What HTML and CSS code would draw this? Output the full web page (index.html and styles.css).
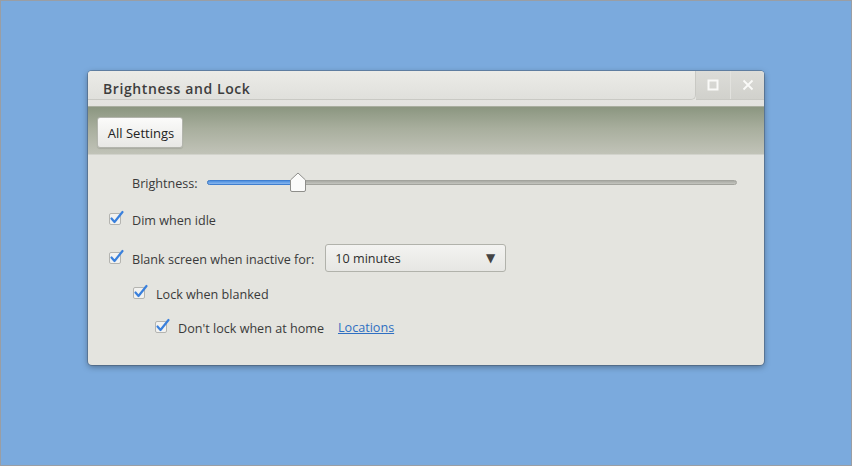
FILE: index.html
```html
<!DOCTYPE html>
<html>
<head>
<meta charset="utf-8">
<link rel="stylesheet" href="styles.css">
</head>
<body>
<div class="desktop">
  <div class="window">
    <div class="titlebar">
      <div class="tab"><span class="title">Brightness and Lock</span></div>
      <div class="controls">
        <div class="ctl">
          <svg width="12" height="12" viewBox="0 0 12 12"><rect x="1.5" y="1.5" width="9" height="9" fill="none" stroke="#fafaf8" stroke-width="2"/></svg>
        </div>
        <div class="ctl sep">
          <svg width="12" height="12" viewBox="0 0 12 12"><path d="M1.5 1.5 L10.5 10.5 M10.5 1.5 L1.5 10.5" stroke="#fafaf8" stroke-width="1.8" fill="none"/></svg>
        </div>
      </div>
    </div>
    <div class="toolbar">
      <button class="btn">All Settings</button>
    </div>
    <div class="content">
      <div class="row slider-row">
        <span class="label">Brightness:</span>
        <div class="slider">
          <div class="track"></div>
          <div class="fill" style="width: 91px"></div>
          <svg class="knob" style="left: 82px" width="18" height="21" viewBox="0 0 18 21"><path d="M1.5 8 L9 1 L16.5 8 V18 Q16.5 19.5 15 19.5 H3 Q1.5 19.5 1.5 18 Z" fill="#fbfbfa" stroke="#8e8e8a" stroke-width="1"/></svg>
        </div>
      </div>
      <div class="row check-row r-dim">
        <span class="cb"><svg width="16" height="16" viewBox="0 0 16 16"><rect x="1.5" y="3.5" width="11" height="11" rx="1.5" fill="#f2f2f0" stroke="#b4b4b0"/><path d="M3.5 8.5 L6.5 12 L14.5 2" fill="none" stroke="#3a80dc" stroke-width="2.2" stroke-linecap="round" stroke-linejoin="round"/></svg></span>
        <span class="label">Dim when idle</span>
      </div>
      <div class="row check-row r-blank">
        <span class="cb"><svg width="16" height="16" viewBox="0 0 16 16"><rect x="1.5" y="3.5" width="11" height="11" rx="1.5" fill="#f2f2f0" stroke="#b4b4b0"/><path d="M3.5 8.5 L6.5 12 L14.5 2" fill="none" stroke="#3a80dc" stroke-width="2.2" stroke-linecap="round" stroke-linejoin="round"/></svg></span>
        <span class="label">Blank screen when inactive for:</span>
        <div class="combo"><span>10 minutes</span><span class="arrow">▼</span></div>
      </div>
      <div class="row check-row r-lock">
        <span class="cb"><svg width="16" height="16" viewBox="0 0 16 16"><rect x="1.5" y="3.5" width="11" height="11" rx="1.5" fill="#f2f2f0" stroke="#b4b4b0"/><path d="M3.5 8.5 L6.5 12 L14.5 2" fill="none" stroke="#3a80dc" stroke-width="2.2" stroke-linecap="round" stroke-linejoin="round"/></svg></span>
        <span class="label">Lock when blanked</span>
      </div>
      <div class="row check-row r-home">
        <span class="cb"><svg width="16" height="16" viewBox="0 0 16 16"><rect x="1.5" y="3.5" width="11" height="11" rx="1.5" fill="#f2f2f0" stroke="#b4b4b0"/><path d="M3.5 8.5 L6.5 12 L14.5 2" fill="none" stroke="#3a80dc" stroke-width="2.2" stroke-linecap="round" stroke-linejoin="round"/></svg></span>
        <span class="label">Don't lock when at home</span>
        <a class="link" href="#">Locations</a>
      </div>
    </div>
  </div>
</div>
</body>
</html>
```
FILE: styles.css
```css
* { box-sizing: border-box; }
html, body { margin: 0; padding: 0; }
body {
  width: 852px;
  height: 466px;
  overflow: hidden;
  font-family: "Open Sans", "DejaVu Sans", sans-serif;
}
.desktop {
  width: 852px;
  height: 466px;
  background: #7baadd;
  border: 1px solid #9a9ea4;
  padding: 70px 0 0 87px;
}
.window {
  width: 676px;
  height: 294px;
  border-radius: 4px;
  background: #e4e4df;
  box-shadow: 0 0 0 1px rgba(60,70,80,0.35), 0 2px 6px rgba(0,0,0,0.35);
  overflow: hidden;
  display: flex;
  flex-direction: column;
}
.titlebar {
  height: 36px;
  display: flex;
  align-items: flex-start;
  background: linear-gradient(#e9e9e5, #e3e3df);
  border-bottom: 1px solid #a9ae9f;
}
.tab {
  flex: 1;
  height: 29px;
  background: linear-gradient(#ebebe7, #e0e0dc);
  border-bottom: 1px solid #c9c9c4;
  border-right: 1px solid #c9c9c4;
  border-bottom-right-radius: 5px;
  display: flex;
  align-items: center;
  padding-left: 15px;
}
.title {
  font-size: 14px;
  font-weight: 600;
  color: #3d3d3d;
  letter-spacing: 0.6px;
  padding-top: 6px;
}
.controls {
  width: 68px;
  height: 29px;
  display: flex;
  background: linear-gradient(#dcdcd8, #d1d1cc);
  border-bottom: 1px solid #c9c9c4;
}
.ctl {
  width: 34px;
  height: 28px;
  display: flex;
  align-items: center;
  justify-content: center;
}
.ctl.sep { border-left: 1px solid #e2e2de; }
.toolbar {
  height: 48px;
  background: linear-gradient(#8b9680, #a8ae9d 45%, #c1c3b8);
  border-bottom: 1px solid #d2d3cc;
  padding: 10px 0 0 9px;
}
.btn {
  width: 86px;
  height: 31px;
  border: 1px solid #b3b5ad;
  border-radius: 3px;
  background: linear-gradient(#fbfbfa, #e8e8e5);
  font-family: "Open Sans", "DejaVu Sans", sans-serif;
  font-size: 13px;
  color: #222;
  padding: 0 0 0 2px;
  box-shadow: 0 1px 1px rgba(0,0,0,0.1);
}
.content {
  flex: 1;
  padding-top: 16px;
  font-size: 12.6px;
  color: #3a3a3a;
}
.label { padding-top: 2px; }
.row {
  display: flex;
  align-items: center;
}
.slider-row {
  height: 22px;
  padding-left: 44px;
  padding-right: 27px;
}
.slider-row .label { width: 75px; }
.slider {
  flex: 1;
  position: relative;
  height: 22px;
}
.track {
  position: absolute;
  left: 0; right: 0;
  top: 9px;
  height: 5px;
  border-radius: 3px;
  background: linear-gradient(#a9aaa4, #c4c5bf);
  border: 1px solid #a2a39d;
}
.fill {
  position: absolute;
  left: 0;
  top: 9px;
  height: 5px;
  border-radius: 3px;
  background: linear-gradient(#4d8fe0, #8ab8ee);
  border: 1px solid #3f7ecf;
}
.knob {
  position: absolute;
  top: 1px;
}
.check-row { height: 22px; }
.cb {
  width: 24px;
  display: flex;
  align-items: center;
}
.cb svg { margin-top: -2px; }
.r-dim { margin-top: 15px; padding-left: 20px; }
.r-blank { margin-top: 14px; height: 28px; padding-left: 20px; }
.r-lock { margin-top: 10px; padding-left: 44px; }
.r-home { margin-top: 12px; padding-left: 66px; }
.combo {
  margin-left: 11px;
  width: 181px;
  height: 28px;
  border: 1px solid #b1b2ab;
  border-radius: 3px;
  background: linear-gradient(#f3f3f1, #e6e6e3);
  display: flex;
  align-items: center;
  justify-content: space-between;
  padding: 0 10px 0 9px;
  color: #2e2e2e;
}
.arrow { font-size: 12px; color: #444; margin-top: -1px; }
.link {
  margin-left: 14px;
  color: #2f6fc2;
  text-decoration: underline;
}
```
